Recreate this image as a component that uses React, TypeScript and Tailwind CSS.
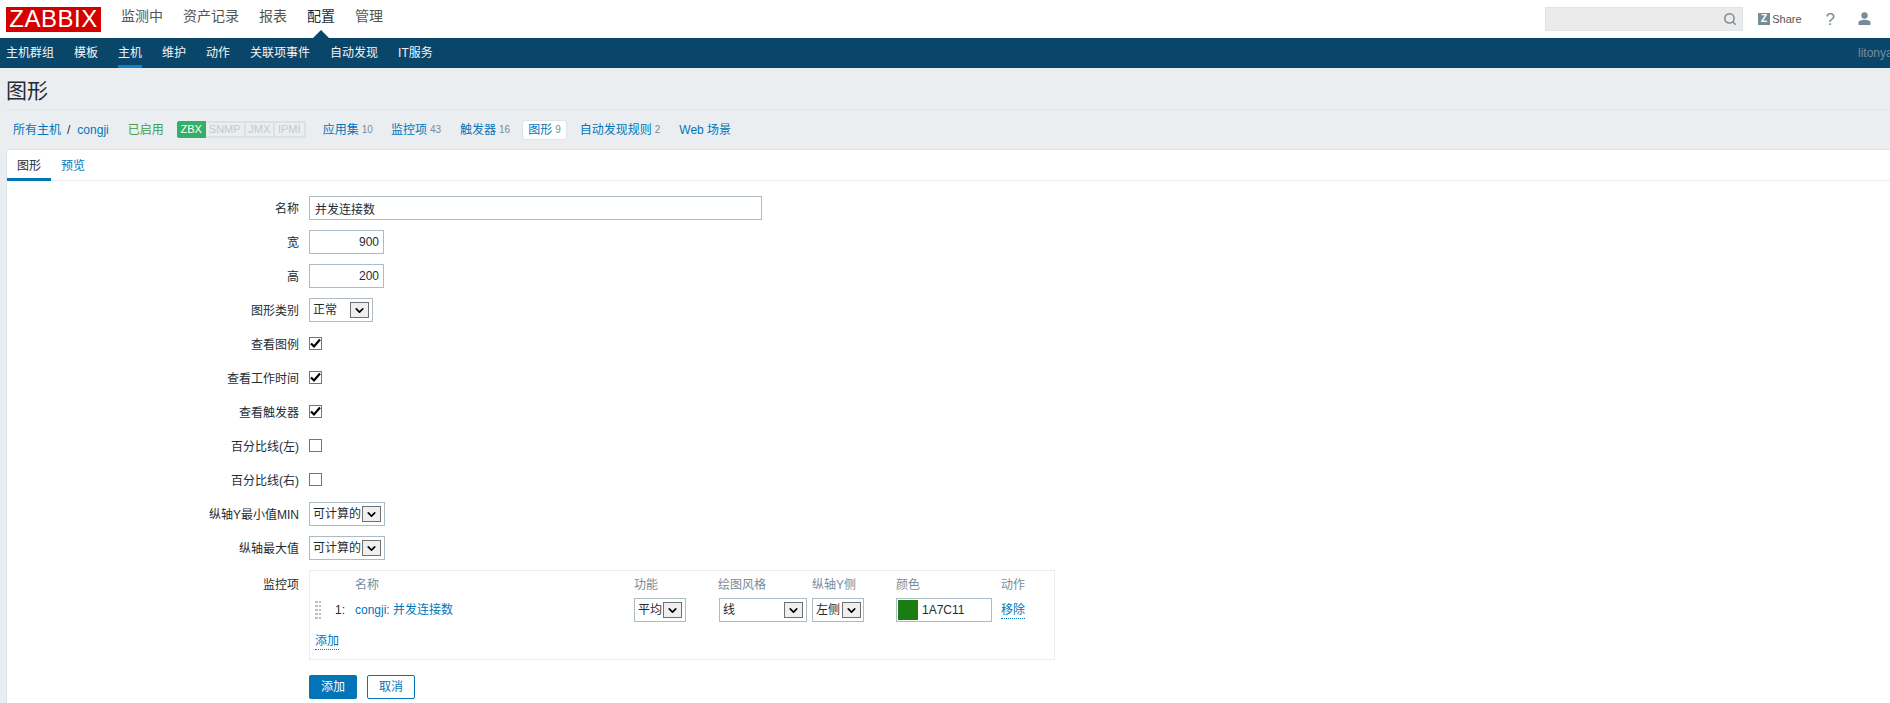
import { ChevronDown, Search } from "lucide-react"

const font = "font-['Liberation_Sans','Noto_Sans_CJK_SC',sans-serif]"

function FakeSelect({ label, width, gap }: { label: string; width: string; gap: string }) {
  return (
    <div className={`flex h-6 items-center border border-[#acbbc4] bg-white pl-[3px] text-[12px] text-[#1f2c33] ${width}`}>
      <span className="whitespace-nowrap">{label}</span>
      <span className={`flex h-4 w-[19px] shrink-0 items-center justify-center border border-[#707070] bg-[#efefef] ${gap}`}>
        <ChevronDown size={13} strokeWidth={3} className="text-black" />
      </span>
    </div>
  )
}

function FormRow({ label, children, top }: { label: string; children: React.ReactNode; top?: boolean }) {
  return (
    <div className={`flex gap-[10px] ${top ? "items-start" : "items-center"}`}>
      <label className={`w-[292px] shrink-0 text-right text-[12px] text-[#1f2c33] ${top ? "pt-[6px]" : "pt-[1px]"}`}>{label}</label>
      {children}
    </div>
  )
}

function CheckRow({ label, checked }: { label: string; checked?: boolean }) {
  return (
    <FormRow label={label}>
      <span className="flex h-6 items-center pb-[1px]">
        <span className="flex h-[13px] w-[13px] items-center justify-center border border-[#767676] bg-white">
          {checked && (
            <svg width="11" height="11" viewBox="0 0 11 11">
              <path d="M1 5.5 L4 8.5 L10 1.5" fill="none" stroke="#000" strokeWidth="2.2" />
            </svg>
          )}
        </span>
      </span>
    </FormRow>
  )
}

function HostLink({ label, count, active, className }: { label: string; count?: string; active?: boolean; className?: string }) {
  return (
    <a
      className={`flex items-center gap-[3px] whitespace-nowrap text-[12px] text-[#0275b8] ${
        active ? "h-5 rounded-[3px] border border-[#dfe4e7] bg-white px-[5px]" : ""
      } ${className ?? ""}`}
    >
      {label}
      {count && <span className="text-[10px] text-[#768d99]">{count}</span>}
    </a>
  )
}

function DragHandle() {
  return (
    <div className="grid w-[6px] grid-cols-2 gap-x-[1px] gap-y-[1.5px]">
      {Array.from({ length: 10 }).map((_, i) => (
        <span key={i} className="h-[2.5px] w-[2.5px] bg-[#b5c1c8]" />
      ))}
    </div>
  )
}

const columns = "grid grid-cols-[21px_19px_279px_84px_94px_84px_105px_1fr]"

export default function App() {
  return (
    <div className={`flex h-[703px] flex-col overflow-hidden bg-[#ebeef0] ${font}`}>
      {/* Top bar */}
      <header className="relative flex h-[38px] shrink-0 items-center bg-white">
        <div className="ml-[6px] flex h-[25px] w-[95px] items-center justify-center bg-[#d40000] text-[24px] leading-none tracking-[0.5px] text-white">
          ZABBIX
        </div>
        <nav className="-mt-[6px] ml-5 flex gap-5 text-[14px] text-[#555]">
          <a>监测中</a>
          <a>资产记录</a>
          <a>报表</a>
          <a className="relative text-[#1f2c33]">
            配置
            <span className="absolute left-1/2 top-[24px] h-0 w-0 -translate-x-1/2 border-x-8 border-b-8 border-x-transparent border-b-[#0a466a]" />
          </a>
          <a>管理</a>
        </nav>
        <div className="ml-auto flex h-6 w-[198px] items-center justify-end border border-[#e4e4e4] bg-[#ebebeb] pr-[5px]">
          <Search size={14} strokeWidth={2.5} className="text-[#768d99]" />
        </div>
        <a className="ml-[15px] flex items-center gap-[2px] text-[11px] text-[#555]">
          <span className="flex h-3 w-3 items-center justify-center bg-[#768d99] text-[10px] font-bold leading-none text-white">Z</span>
          Share
        </a>
        <span className="ml-[24px] text-[17px] leading-none text-[#768d99]">?</span>
        <svg width="13" height="14" viewBox="0 0 13 14" className="ml-[23px] mr-[19px]">
          <circle cx="6.5" cy="3.5" r="3.2" fill="#768d99" />
          <path d="M0.5 13 V10.5 C0.5 8.8 3.5 7.8 6.5 7.8 C9.5 7.8 12.5 8.8 12.5 10.5 V13 Z" fill="#768d99" />
        </svg>
      </header>

      {/* Sub nav */}
      <div className="flex h-[30px] shrink-0 items-stretch overflow-hidden bg-[#0a466a] pl-[6px] text-[12px] text-[#f2f5f7]">
        <div className="flex gap-5">
          <a className="flex items-center">主机群组</a>
          <a className="flex items-center">模板</a>
          <a className="flex items-center border-b-[3px] border-[#0f82c4] pt-[3px]">主机</a>
          <a className="flex items-center">维护</a>
          <a className="flex items-center">动作</a>
          <a className="flex items-center">关联项事件</a>
          <a className="flex items-center">自动发现</a>
          <a className="flex items-center">IT服务</a>
        </div>
        <span className="ml-auto -mr-[10px] flex w-[42px] items-center whitespace-nowrap text-[#768d99]">litonya</span>
      </div>

      {/* Title */}
      <div className="ml-[6px] flex h-[42px] shrink-0 items-center border-b border-[#dfe4e7] pt-[3px]">
        <h1 className="text-[21px] font-normal leading-none text-[#1f2c33]">图形</h1>
      </div>

      {/* Host navigation */}
      <div className="flex h-[39px] shrink-0 items-center pl-[13px]">
        <a className="text-[12px] text-[#0275b8]">所有主机</a>
        <span className="mx-[6px] text-[12px] text-[#1f2c33]">/</span>
        <a className="ml-[1px] text-[12px] text-[#0275b8]">congji</a>
        <span className="ml-[19px] text-[12px] text-[#429e47]">已启用</span>
        <div className="ml-[13px] flex h-[17px] text-[11px] leading-none">
          <span className="flex w-[29px] items-center justify-center rounded-l-[2px] bg-[#34af67] text-white">ZBX</span>
          <span className="flex w-10 items-center justify-center border-2 border-l-0 border-[#dce1e4] text-[#c0cbd2]">SNMP</span>
          <span className="flex w-[29px] items-center justify-center border-2 border-l-0 border-[#dce1e4] text-[#c0cbd2]">JMX</span>
          <span className="flex w-[31px] items-center justify-center rounded-r-[2px] border-2 border-l-0 border-[#dce1e4] text-[#c0cbd2]">IPMI</span>
        </div>
        <HostLink label="应用集" count="10" className="ml-[17px]" />
        <HostLink label="监控项" count="43" className="ml-[18px]" />
        <HostLink label="触发器" count="16" className="ml-[19px]" />
        <HostLink label="图形" count="9" active className="ml-[12px]" />
        <HostLink label="自动发现规则" count="2" className="ml-[13px]" />
        <HostLink label="Web 场景" className="ml-[19px]" />
      </div>

      {/* Panel */}
      <main className="ml-[6px] flex-1 border-l border-t border-[#dfe4e7] bg-white">
        <div className="flex h-[31px] gap-[10px] border-b border-[#ebeef0]">
          <a className="flex h-[31px] w-11 items-center justify-center border-b-[3px] border-[#0275b8] pt-[3px] text-[12px] text-[#1f2c33]">图形</a>
          <a className="flex h-[31px] items-center text-[12px] text-[#0275b8]">预览</a>
        </div>

        <div className="flex flex-col gap-[10px] pt-[15px]">
          <FormRow label="名称">
            <input
              readOnly
              value="并发连接数"
              className="h-6 w-[453px] border border-[#acbbc4] px-[5px] text-[12px] text-[#1f2c33] outline-none"
            />
          </FormRow>
          <FormRow label="宽">
            <input readOnly value="900" className="h-6 w-[75px] border border-[#acbbc4] pr-[4px] text-right text-[12px] text-[#1f2c33] outline-none" />
          </FormRow>
          <FormRow label="高">
            <input readOnly value="200" className="h-6 w-[75px] border border-[#acbbc4] pr-[4px] text-right text-[12px] text-[#1f2c33] outline-none" />
          </FormRow>
          <FormRow label="图形类别">
            <FakeSelect label="正常" width="w-[64px]" gap="ml-[13px]" />
          </FormRow>
          <CheckRow label="查看图例" checked />
          <CheckRow label="查看工作时间" checked />
          <CheckRow label="查看触发器" checked />
          <CheckRow label="百分比线(左)" />
          <CheckRow label="百分比线(右)" />
          <FormRow label="纵轴Y最小值MIN">
            <FakeSelect label="可计算的" width="w-[76px]" gap="ml-[1px]" />
          </FormRow>
          <FormRow label="纵轴最大值">
            <FakeSelect label="可计算的" width="w-[76px]" gap="ml-[1px]" />
          </FormRow>

          <FormRow label="监控项" top>
            <div className="h-[90px] w-[746px] border border-[#ebeef0] pl-[5px]">
              <div className={`${columns} h-[27px] items-center text-[12px] text-[#768d99]`}>
                <span />
                <span />
                <span>名称</span>
                <span>功能</span>
                <span>绘图风格</span>
                <span>纵轴Y侧</span>
                <span>颜色</span>
                <span>动作</span>
              </div>
              <div className={`${columns} h-6 items-center text-[12px] text-[#1f2c33]`}>
                <DragHandle />
                <span className="-ml-[1px]">1:</span>
                <a className="text-[#0275b8]">congji: 并发连接数</a>
                <FakeSelect label="平均" width="w-[52px]" gap="ml-[1px]" />
                <div className="pl-[1px]">
                  <FakeSelect label="线" width="w-[88px]" gap="ml-[49px]" />
                </div>
                <FakeSelect label="左侧" width="w-[52px]" gap="ml-[2px]" />
                <div className="flex h-6 w-24 items-center border border-[#acbbc4] pl-[1px]">
                  <span className="h-5 w-5 bg-[#1a7c11]" />
                  <span className="ml-1">1A7C11</span>
                </div>
                <a className="mt-[1px] w-fit border-b border-dotted border-[#0275b8] leading-[15px] text-[#0275b8]">移除</a>
              </div>
              <a className="mt-[11px] block w-fit border-b border-dotted border-[#0275b8] text-[12px] leading-[16px] text-[#0275b8]">添加</a>
            </div>
          </FormRow>

          <div className="ml-[302px] mt-[5px] flex gap-[10px]">
            <button className="h-6 w-12 rounded-[2px] bg-[#0275b8] text-[12px] text-white">添加</button>
            <button className="h-6 w-12 rounded-[2px] border border-[#0275b8] bg-white text-[12px] text-[#0275b8]">取消</button>
          </div>
        </div>
      </main>
    </div>
  )
}
